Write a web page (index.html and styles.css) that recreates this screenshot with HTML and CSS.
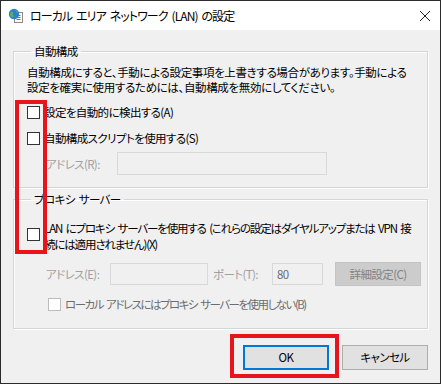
FILE: index.html
```html
<!DOCTYPE html>
<html lang="ja">
<head>
    <meta charset="UTF-8">
    <title>ローカル エリア ネットワーク (LAN) の設定</title>
    <link rel="stylesheet" href="styles.css">
</head>
<body>
    <div class="window">
        <div class="titlebar">
            <svg class="app-icon" width="16" height="16" viewBox="0 0 16 16">
                <rect x="6.5" y="4.5" width="8" height="10" fill="#fff" stroke="#8a8a8a"/>
                <line x1="8.5" y1="7.5" x2="12.5" y2="7.5" stroke="#3c78c8"/>
                <line x1="8.5" y1="9.5" x2="12.5" y2="9.5" stroke="#3c78c8"/>
                <line x1="8.5" y1="11.5" x2="12.5" y2="11.5" stroke="#3c78c8"/>
                <circle cx="6" cy="6" r="5.2" fill="#2f7fcf"/>
                <path d="M2.5 4.2 C4 2.6 5.5 3.8 4.8 5.4 C4.2 6.8 6 7.6 5.4 9.6 C4 9.4 2.6 8 2.2 6.4 Z" fill="#5cb64a"/>
                <path d="M7.2 2.2 C8.6 2.6 9.8 3.4 10.4 4.6 C9.2 5 8.2 4.2 7.2 2.2 Z" fill="#5cb64a"/>
            </svg>
            <span class="title">ローカル エリア ネットワーク (LAN) の設定</span>
            <svg class="close" width="12" height="12" viewBox="0 0 12 12">
                <path d="M1 1 L11 11 M11 1 L1 11" stroke="#222" stroke-width="1"/>
            </svg>
        </div>

        <div class="content">
            <fieldset class="group">
                <legend>自動構成</legend>
                <p class="note">自動構成にすると、手動による設定事項を上書きする場合があります。手動による<br>設定を確実に使用するためには、自動構成を無効にしてください。</p>
                <div class="check-row first">
                    <span class="box"></span>
                    <span>設定を自動的に検出する(A)</span>
                </div>
                <div class="check-row">
                    <span class="box"></span>
                    <span>自動構成スクリプトを使用する(S)</span>
                </div>
                <div class="field-row script-row">
                    <span class="label disabled">アドレス(R):</span>
                    <span class="input wide"></span>
                </div>
            </fieldset>

            <fieldset class="group proxy">
                <legend>プロキシ サーバー</legend>
                <div class="check-row multi">
                    <span class="box"></span>
                    <span class="multi-text">LAN にプロキシ サーバーを使用する (これらの設定はダイヤルアップまたは VPN 接<br>続には適用されません)(X)</span>
                </div>
                <div class="field-row proxy-row">
                    <span class="label disabled">アドレス(E):</span>
                    <span class="input addr"></span>
                    <span class="label disabled port-label">ポート(T):</span>
                    <span class="input port">80</span>
                    <span class="btn-disabled">詳細設定(C)</span>
                </div>
                <div class="check-row bypass">
                    <span class="box off"></span>
                    <span class="disabled-text">ローカル アドレスにはプロキシ サーバーを使用しない(B)</span>
                </div>
            </fieldset>

            <div class="buttons">
                <span class="btn default">OK</span>
                <span class="btn">キャンセル</span>
            </div>
        </div>

        <!-- annotation frames from the screenshot -->
        <div class="mark mark-checks"></div>
        <div class="mark mark-ok"></div>
    </div>
</body>
</html>
```

FILE: styles.css
```css
:root {
    --face: #f0f0f0;
    --text: #000;
    --grey-text: #a0a0a0;
    --etch: #d5d5d5;
    --mark: #e8141c;
}

* {
    box-sizing: border-box;
}

body {
    margin: 0;
    font-family: "Noto Sans CJK JP", "Noto Sans", sans-serif;
    font-size: 11.5px;
    letter-spacing: -0.6px;
    word-spacing: 2px;
    font-feature-settings: "palt";
    color: var(--text);
    background: #fff;
}

.window {
    position: relative;
    width: 441px;
    height: 384px;
    border: 1px solid #2b2b2b;
    background: var(--face);
    overflow: hidden;
}

.titlebar {
    display: flex;
    align-items: center;
    height: 29px;
    background: #fff;
    padding-left: 7px;
}

.app-icon {
    margin-right: 6px;
}

.title {
    flex: 1;
    line-height: 16px;
    font-size: 12px;
    letter-spacing: -0.9px;
}

.close {
    margin-right: 9px;
}

.content {
    padding: 0 12px 0 12px;
}

.group {
    margin: 13px 0 0 0;
    padding: 0 0 12px 13px;
    border: 1px solid var(--etch);
    box-shadow: inset 1px 1px 0 #fff, 1px 1px 0 #fff;
}

.group legend {
    margin-left: 4px;
    padding: 0 3px;
    line-height: 16px;
}

.group.proxy {
    margin-top: 3px;
    padding-bottom: 14px;
}

.note {
    margin: 6px 0 0 0;
    line-height: 15px;
    letter-spacing: -0.35px;
    white-space: nowrap;
}

.check-row {
    display: flex;
    align-items: center;
    height: 20px;
    margin-top: 6px;
    white-space: nowrap;
}

.check-row.first {
    margin-top: 7px;
}

.check-row.multi {
    height: 32px;
    margin-top: 13px;
    line-height: 16px;
    align-items: flex-start;
}

.check-row.multi .box {
    margin-top: 8px;
}

.multi-text {
    letter-spacing: -1.15px;
}

.check-row.bypass {
    margin-top: 8px;
    padding-left: 21px;
}

.box {
    flex: none;
    width: 13px;
    height: 13px;
    margin-right: 4px;
    background: #fff;
    border: 1px solid #333;
}

.box.off {
    border-color: #bcbcbc;
}

.disabled-text {
    color: #6d6d6d;
    letter-spacing: -1.5px;
}

.field-row {
    display: flex;
    align-items: center;
    white-space: nowrap;
}

.script-row {
    margin-top: 4px;
    padding-left: 19px;
}

.script-row .label {
    width: 71px;
}

.proxy-row {
    margin-top: 10px;
    padding-left: 19px;
}

.proxy-row .label {
    width: 64px;
}

.label.disabled {
    color: var(--grey-text);
}

.input {
    height: 23px;
    border: 1px solid #d9d9d9;
    background: var(--face);
    color: #6d6d6d;
    padding: 2px 4px;
    line-height: 17px;
}

.input.wide {
    width: 210px;
}

.input.addr {
    width: 98px;
    height: 22px;
}

.proxy-row .port-label {
    width: 59px;
    margin-left: 5px;
}

.input.port {
    width: 51px;
    height: 22px;
}

.btn-disabled {
    width: 86px;
    height: 24px;
    margin-left: 12px;
    background: #cccccc;
    border: 1px solid #c4c4c4;
    color: #838383;
    text-align: center;
    line-height: 22px;
}

.buttons {
    display: flex;
    justify-content: flex-end;
    gap: 13px;
    margin-top: 16px;
}

.btn {
    width: 86px;
    height: 25px;
    background: #e1e1e1;
    border: 1px solid #adadad;
    text-align: center;
    line-height: 23px;
}

.btn.default {
    border: 2px solid #0078d7;
    line-height: 21px;
}

.mark {
    position: absolute;
    border: 4px solid var(--mark);
}

.mark-checks {
    left: 14px;
    top: 99px;
    width: 32px;
    height: 154px;
}

.mark-ok {
    left: 229px;
    top: 333px;
    width: 109px;
    height: 44px;
}
```
